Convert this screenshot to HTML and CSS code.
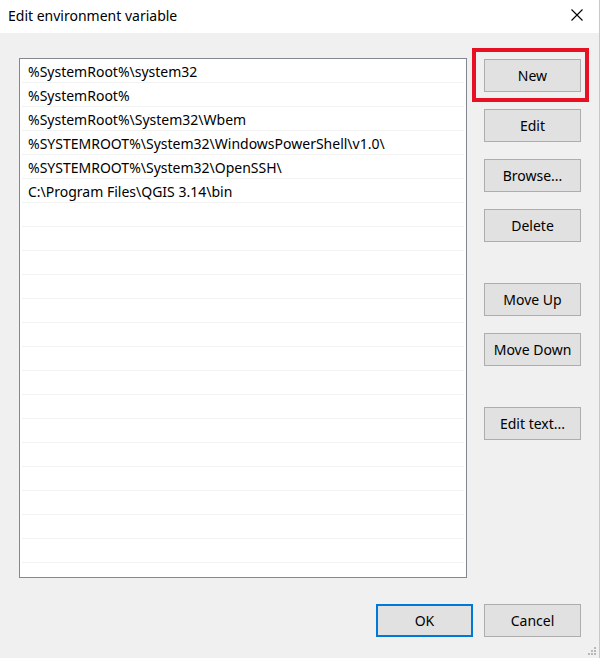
FILE: index.html
```html
<!DOCTYPE html>
<html>
<head>
<meta charset="utf-8">
<link rel="stylesheet" href="styles.css">
</head>
<body>
<div class="window">
  <div class="titlebar">
    <span class="title">Edit environment variable</span>
    <svg class="close" width="12" height="12" viewBox="0 0 12 12"><path d="M0.5 0.5 L11.5 11.5 M11.5 0.5 L0.5 11.5" stroke="#000" stroke-width="1.1" fill="none"/></svg>
  </div>
  <div class="content">
    <div class="main">
      <div class="list">
        <div class="row">%SystemRoot%\system32</div>
        <div class="row">%SystemRoot%</div>
        <div class="row">%SystemRoot%\System32\Wbem</div>
        <div class="row">%SYSTEMROOT%\System32\WindowsPowerShell\v1.0\</div>
        <div class="row">%SYSTEMROOT%\System32\OpenSSH\</div>
        <div class="row">C:\Program Files\QGIS 3.14\bin</div>
        <div class="row"></div><div class="row"></div><div class="row"></div><div class="row"></div>
        <div class="row"></div><div class="row"></div><div class="row"></div><div class="row"></div>
        <div class="row"></div><div class="row"></div><div class="row"></div><div class="row"></div>
        <div class="row"></div><div class="row"></div><div class="row"></div>
      </div>
      <div class="side">
        <button class="btn">New</button>
        <button class="btn">Edit</button>
        <button class="btn">Browse...</button>
        <button class="btn">Delete</button>
        <button class="btn gap">Move Up</button>
        <button class="btn">Move Down</button>
        <button class="btn gap">Edit text...</button>
      </div>
    </div>
    <div class="footer">
      <button class="btn ok">OK</button>
      <button class="btn">Cancel</button>
    </div>
  </div>
  <div class="highlight"></div>
  <svg class="grip" width="10" height="10" viewBox="0 0 10 10">
    <g fill="#b8b8b8">
      <rect x="7" y="1" width="2" height="2"/>
      <rect x="4" y="4" width="2" height="2"/><rect x="7" y="4" width="2" height="2"/>
      <rect x="1" y="7" width="2" height="2"/><rect x="4" y="7" width="2" height="2"/><rect x="7" y="7" width="2" height="2"/>
    </g>
  </svg>
</div>
</body>
</html>
```
FILE: styles.css
```css
html, body {
  margin: 0;
  padding: 0;
}
body {
  width: 600px;
  height: 658px;
  overflow: hidden;
  font-family: "Segoe UI", "Noto Sans", sans-serif;
  font-size: 14px;
  color: #000;
}
.window {
  position: relative;
  width: 600px;
  height: 658px;
  background: #f0f0f0;
  box-sizing: border-box;
  border-right: 1px solid #c8c8c8;
}
.titlebar {
  height: 33px;
  background: #fff;
  display: flex;
  align-items: center;
  justify-content: space-between;
  padding: 0 16px 0 8px;
  box-sizing: border-box;
}
.title {
  font-size: 14px;
  margin-top: -2px;
}
.close {
  margin-top: -4px;
}
.content {
  padding: 25px 0 0 19px;
}
.main {
  display: flex;
  align-items: flex-start;
}
.list {
  width: 448px;
  height: 520px;
  box-sizing: border-box;
  border: 1px solid #828790;
  background: #fff;
  padding: 0 2px;
  overflow: hidden;
}
.row {
  height: 24px;
  box-sizing: border-box;
  border-bottom: 1px solid #f2f2f2;
  line-height: 25px;
  padding-left: 6px;
  white-space: nowrap;
}
.side {
  display: flex;
  flex-direction: column;
  margin-left: 17px;
  padding-top: 1px;
  gap: 17px;
}
.btn {
  width: 97px;
  height: 33px;
  box-sizing: border-box;
  border: 1px solid #adadad;
  background: #e1e1e1;
  font-family: inherit;
  font-size: 14px;
  color: #000;
  padding: 0;
  margin: 0;
}
.side .gap {
  margin-top: 24px;
}
.footer {
  display: flex;
  justify-content: flex-end;
  gap: 11px;
  margin-top: 26px;
  padding-right: 18px;
}
.btn.ok {
  border: 2px solid #0078d7;
}
.highlight {
  position: absolute;
  left: 472px;
  top: 48px;
  width: 117px;
  height: 54px;
  box-sizing: border-box;
  border: 4px solid #e81123;
}
.grip {
  position: absolute;
  right: 2px;
  bottom: 2px;
}
```
